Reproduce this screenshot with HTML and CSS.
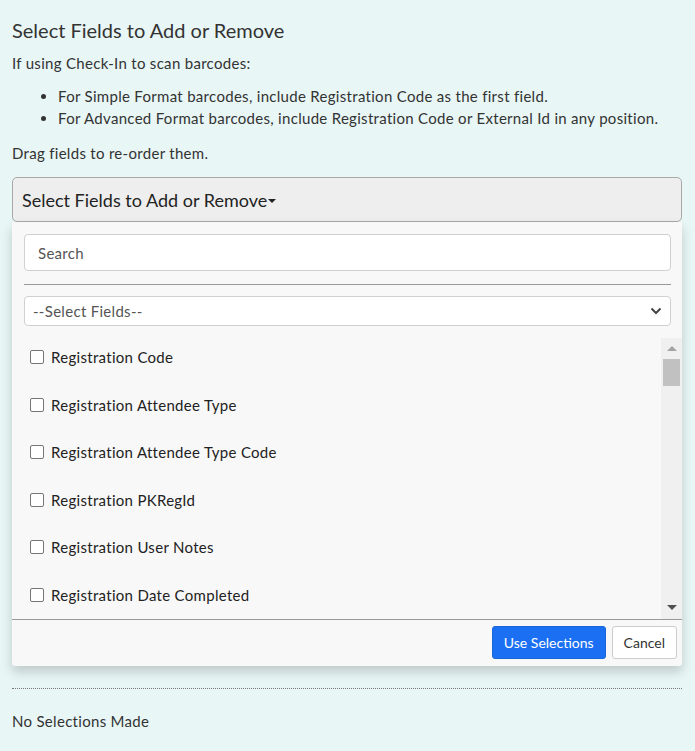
FILE: index.html
```html
<!DOCTYPE html>
<html>
<head>
<meta charset="utf-8">
<link rel="stylesheet" href="styles.css">
</head>
<body>
<div class="page">
  <h3 class="title">Select Fields to Add or Remove</h3>
  <p class="intro">If using Check-In to scan barcodes:</p>
  <ul class="tips">
    <li>For Simple Format barcodes, include Registration Code as the first field.</li>
    <li>For Advanced Format barcodes, include Registration Code or External Id in any position.</li>
  </ul>
  <p class="drag">Drag fields to re-order them.</p>

  <div class="picker">
    <button class="toggle">Select Fields to Add or Remove<span class="caret"></span></button>
    <div class="menu">
      <div class="menu-body">
        <input class="search" type="text" placeholder="Search">
        <div class="divider"></div>
        <div class="select">
          <span>--Select Fields--</span>
          <svg class="chev" width="12" height="8" viewBox="0 0 12 8"><path d="M1.5 1.5 L6 6 L10.5 1.5" fill="none" stroke="#444" stroke-width="2"/></svg>
        </div>
      </div>
      <div class="list-wrap">
        <div class="list">
          <label class="item"><span class="box"></span>Registration Code</label>
          <label class="item"><span class="box"></span>Registration Attendee Type</label>
          <label class="item"><span class="box"></span>Registration Attendee Type Code</label>
          <label class="item"><span class="box"></span>Registration PKRegId</label>
          <label class="item"><span class="box"></span>Registration User Notes</label>
          <label class="item"><span class="box"></span>Registration Date Completed</label>
        </div>
        <div class="scrollbar">
          <span class="arrow up"></span>
          <span class="thumb"></span>
          <span class="spacer"></span>
          <span class="arrow down"></span>
        </div>
      </div>
      <div class="menu-foot">
        <button class="btn primary">Use Selections</button>
        <button class="btn">Cancel</button>
      </div>
    </div>
  </div>

  <div class="dotted"></div>
  <p class="none">No Selections Made</p>
</div>
</body>
</html>
```

FILE: styles.css
```css
html, body {
  margin: 0;
  padding: 0;
  background: #e8f6f6;
}
body {
  font-family: Lato, "Open Sans", sans-serif;
  color: #333;
  font-size: 15px;
  letter-spacing: 0.3px;
}
.page {
  padding: 0 13px 0 12px;
  overflow: hidden;
}
.title {
  font-size: 20px;
  font-weight: 400;
  line-height: 24px;
  margin: 18px 0 10px;
  color: #333;
  letter-spacing: 0;
}
.intro {
  margin: 0;
  line-height: 22px;
}
.tips {
  margin: 11px 0 0;
  padding-left: 46px;
  line-height: 22px;
}
.drag {
  margin: 13px 0 0;
  line-height: 22px;
}
.picker {
  margin-top: 13px;
}
.toggle {
  display: flex;
  align-items: center;
  width: 100%;
  height: 45px;
  padding: 0 9px;
  background: #eeeeee;
  border: 1px solid #a8a8a8;
  border-radius: 5px;
  font-family: Lato, sans-serif;
  font-size: 18px;
  letter-spacing: 0;
  color: #222;
  text-align: left;
}
.caret {
  display: inline-block;
  width: 0;
  height: 0;
  margin-left: 1px;
  margin-top: 2px;
  border-top: 4px solid #222;
  border-left: 4px solid transparent;
  border-right: 4px solid transparent;
}
.menu {
  background: #f8f8f8;
  box-shadow: 0 6px 12px rgba(0, 0, 0, 0.18);
  border-radius: 0 0 3px 3px;
}
.menu-body {
  padding: 12px 11px 12px 12px;
}
.search {
  display: block;
  box-sizing: border-box;
  width: 100%;
  height: 37px;
  padding: 0 13px;
  background: #fff;
  border: 1px solid #d0d0d0;
  border-radius: 4px;
  font-family: Lato, sans-serif;
  font-size: 15px;
  letter-spacing: 0.3px;
  color: #333;
}
.search::placeholder {
  color: #555;
}
.divider {
  height: 1px;
  background: #9a9a9a;
  margin: 13px 0 11px;
}
.select {
  display: flex;
  align-items: center;
  justify-content: space-between;
  box-sizing: border-box;
  height: 30px;
  padding: 0 8px 0 8px;
  background: #fff;
  border: 1px solid #d0d0d0;
  border-radius: 4px;
  color: #555;
}
.list-wrap {
  display: flex;
  height: 281px;
}
.list {
  flex: 1;
  padding: 7px 0 0 18px;
  display: flex;
  flex-direction: column;
  gap: 23.6px;
}
.item {
  display: flex;
  align-items: center;
  height: 24px;
  color: #222;
}
.box {
  width: 12px;
  height: 12px;
  border: 1px solid #767676;
  border-radius: 2px;
  background: #fff;
  margin-right: 7px;
}
.scrollbar {
  width: 21px;
  background: #f0f0f0;
  display: flex;
  flex-direction: column;
  align-items: center;
}
.arrow {
  width: 0;
  height: 0;
  border-left: 5px solid transparent;
  border-right: 5px solid transparent;
}
.arrow.up {
  border-bottom: 5px solid #a3a3a3;
  margin-top: 8px;
}
.arrow.down {
  border-top: 5px solid #505050;
  margin-bottom: 9px;
}
.thumb {
  width: 17px;
  height: 27px;
  background: #c1c1c1;
  margin-top: 8px;
}
.spacer {
  flex: 1;
}
.menu-foot {
  display: flex;
  justify-content: flex-end;
  gap: 6px;
  padding: 6px 5px 7px;
  border-top: 1px solid #999;
}
.btn {
  height: 33px;
  padding: 0 11px;
  background: #fff;
  border: 1px solid #ccc;
  border-radius: 3px;
  font-family: Lato, sans-serif;
  font-size: 14px;
  letter-spacing: 0;
  color: #333;
}
.btn.primary {
  background: #1b6ff2;
  border-color: #1866d8;
  color: #fff;
}
.dotted {
  margin-top: 22px;
  border-top: 1px dotted #777;
}
.none {
  margin: 21px 0 0;
  line-height: 22px;
}
```
